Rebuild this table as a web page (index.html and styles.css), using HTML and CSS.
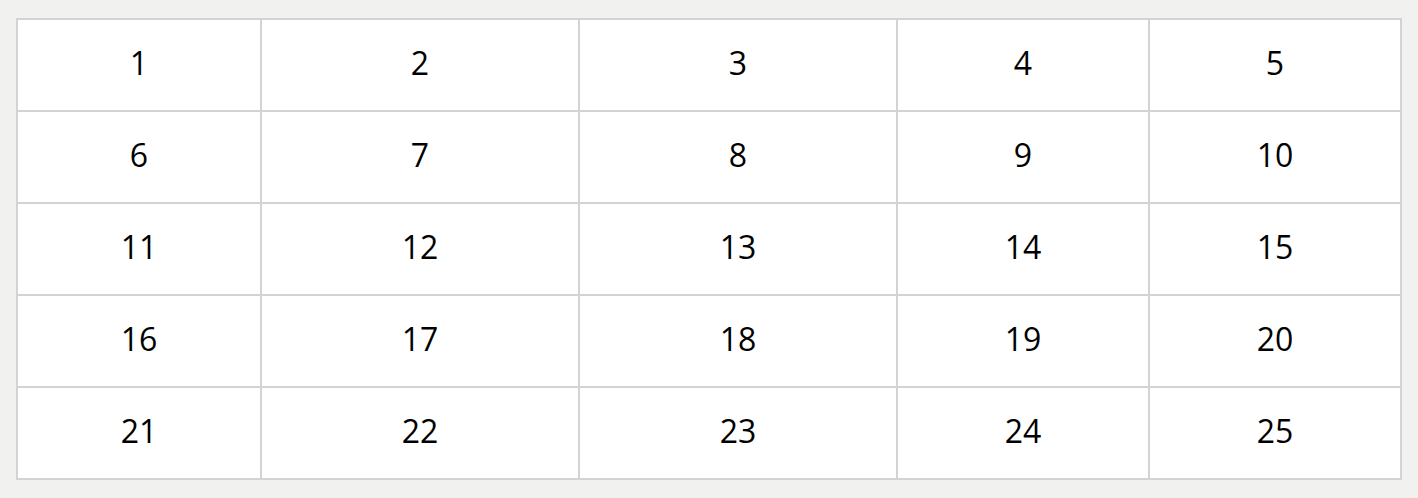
FILE: index.html
```html
<!DOCTYPE html>
<html>
<head>
<meta charset="utf-8">
<link rel="stylesheet" href="styles.css">
</head>
<body>
<table class="grid">
  <colgroup>
    <col class="c1"><col class="c2"><col class="c3"><col class="c4"><col class="c5">
  </colgroup>
  <tr><td>1</td><td>2</td><td>3</td><td>4</td><td>5</td></tr>
  <tr><td>6</td><td>7</td><td>8</td><td>9</td><td>10</td></tr>
  <tr><td>11</td><td>12</td><td>13</td><td>14</td><td>15</td></tr>
  <tr><td>16</td><td>17</td><td>18</td><td>19</td><td>20</td></tr>
  <tr><td>21</td><td>22</td><td>23</td><td>24</td><td>25</td></tr>
</table>
</body>
</html>
```
FILE: styles.css
```css
html, body {
  margin: 0;
  padding: 0;
}
body {
  background: #f1f1f0;
  padding: 18px 16px;
  font-family: "Open Sans", "Noto Sans", sans-serif;
}
.grid {
  border-collapse: collapse;
  table-layout: fixed;
  width: 1386px;
  background: #ffffff;
}
.c1 { width: 244px; }
.c2 { width: 318px; }
.c3 { width: 318px; }
.c4 { width: 252px; }
.c5 { width: 252px; }
.grid td {
  border: 2px solid #d3d3d3;
  height: 92px;
  padding: 0 0 4px;
  box-sizing: border-box;
  text-align: center;
  vertical-align: middle;
  font-size: 32px;
  color: #000;
  line-height: 1;
}
```
